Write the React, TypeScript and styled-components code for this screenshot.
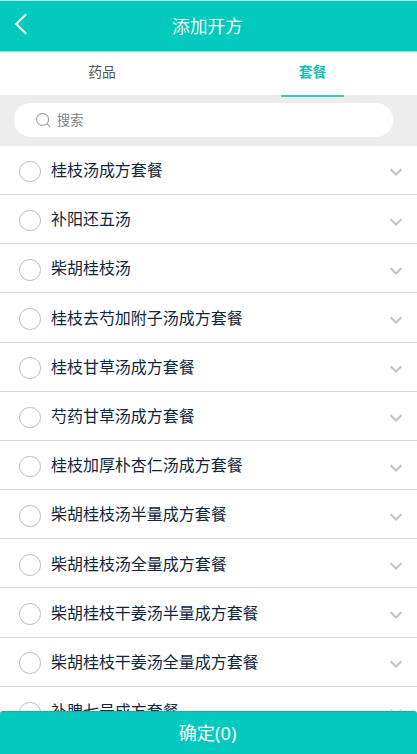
import React, { useState } from "react";
import styled, { createGlobalStyle } from "styled-components";

const GlobalStyle = createGlobalStyle`
  * { box-sizing: border-box; }
  body {
    margin: 0;
    overflow: hidden;
    font-family: "Noto Sans CJK SC", sans-serif;
    background: #fff;
  }
  button { font-family: inherit; border: 0; margin: 0; padding: 0; background: none; }
`;

const Screen = styled.div`
  display: flex;
  flex-direction: column;
  width: 100%;
  height: 754px;
  overflow: hidden;
  background: #fff;
`;

const Header = styled.header`
  flex: none;
  display: grid;
  grid-template-columns: 42px 1fr 44px;
  align-items: center;
  height: 52px;
  border-top: 1px solid #b9e9e5;
  border-bottom: 1px solid #8ae6df;
  background: #04cabe;
  color: #fff;
`;

const BackButton = styled.button`
  display: flex;
  padding: 0 0 4px 14px;
  color: #fff;
`;

const Title = styled.h1`
  margin: 0;
  padding-bottom: 3px;
  text-align: center;
  font-size: 17.8px;
  font-weight: 350;
  line-height: 26px;
`;

const TabBar = styled.nav`
  flex: none;
  position: relative;
  z-index: 1;
  display: grid;
  grid-template-columns: 204px 1fr;
  height: 45px;
`;

const Tab = styled.button<{ $active: boolean }>`
  display: flex;
  justify-content: center;
  justify-self: center;
  width: 63px;
  padding-top: 9px;
  font-size: 13.8px;
  line-height: 21px;
  font-weight: ${(p) => (p.$active ? 700 : 400)};
  color: ${(p) => (p.$active ? "#10beb4" : "#555")};
  border-bottom: 2px solid ${(p) => (p.$active ? "#40cac5" : "transparent")};
  margin-left: ${(p) => (p.$active ? "4px" : "0")};
`;

const SearchArea = styled.div`
  flex: none;
  height: 50.4px;
  margin-top: -1.6px;
  padding: 7.6px 24px 0 14px;
  background: #ededed;
`;

const SearchBox = styled.label`
  display: flex;
  align-items: center;
  gap: 6px;
  height: 34px;
  padding-left: 22px;
  border-radius: 17px;
  background: #fff;
  font-size: 13.2px;
  line-height: 20px;
  color: #808080;
`;

const List = styled.ul`
  flex: 1;
  min-height: 0;
  margin: 0;
  padding: 0;
  overflow: hidden;
  list-style: none;
`;

const Row = styled.li`
  display: flex;
  align-items: center;
  height: 49.2px;
  padding: 0 14px 0 19px;
  border-bottom: 1px solid #d6d6d6;
`;

const Radio = styled.button<{ $checked: boolean }>`
  flex: none;
  width: 21.6px;
  height: 21.6px;
  margin: 3px 10.4px 0 0;
  border: 1px solid #bcbcbc;
  border-radius: 50%;
  background: ${(p) => (p.$checked ? "#04cabe" : "#fff")};
`;

const Name = styled.span`
  flex: 1;
  padding-bottom: 1.6px;
  font-size: 15.97px;
  line-height: 24px;
  color: #10263c;
`;

const ChevronIcon = styled.svg`
  flex: none;
  margin-top: 5px;
`;

const Confirm = styled.button`
  flex: none;
  height: 43px;
  padding: 0 2px 1px 0;
  border-top: 1px solid #08b5aa;
  border-radius: 3px 3px 0 0;
  background: #04cabe;
  color: #fff;
  font-family: "Noto Sans", "Noto Sans CJK SC", sans-serif;
  font-size: 18.2px;
  line-height: 26px;
  font-weight: 400;
`;

const tabs = ["药品", "套餐"];

const packages = [
  "桂枝汤成方套餐",
  "补阳还五汤",
  "柴胡桂枝汤",
  "桂枝去芍加附子汤成方套餐",
  "桂枝甘草汤成方套餐",
  "芍药甘草汤成方套餐",
  "桂枝加厚朴杏仁汤成方套餐",
  "柴胡桂枝汤半量成方套餐",
  "柴胡桂枝汤全量成方套餐",
  "柴胡桂枝干姜汤半量成方套餐",
  "柴胡桂枝干姜汤全量成方套餐",
  "补脾七号成方套餐",
];

export default function App() {
  const [active, setActive] = useState(1);
  const [selected, setSelected] = useState<number[]>([]);

  const toggle = (i: number) =>
    setSelected((s) => (s.includes(i) ? s.filter((n) => n !== i) : [...s, i]));

  return (
    <Screen>
      <GlobalStyle />
      <Header>
        <BackButton aria-label="返回">
          <svg width="14" height="22" viewBox="0 0 14 22" fill="none" stroke="currentColor" strokeWidth="2">
            <path d="M12.3 1.2 2.2 11l10.1 9.8" />
          </svg>
        </BackButton>
        <Title>添加开方</Title>
      </Header>
      <TabBar>
        {tabs.map((label, i) => (
          <Tab key={label} $active={i === active} onClick={() => setActive(i)}>
            {label}
          </Tab>
        ))}
      </TabBar>
      <SearchArea>
        <SearchBox>
          <svg width="15" height="15" viewBox="0 0 15 15" fill="none" stroke="#a5a5a5" strokeWidth="1.1">
            <circle cx="6.6" cy="6.4" r="6" />
            <path d="m10.8 10.6 3.6 3.6" />
          </svg>
          搜索
        </SearchBox>
      </SearchArea>
      <List>
        {packages.map((name, i) => (
          <Row key={name}>
            <Radio aria-label={name} $checked={selected.includes(i)} onClick={() => toggle(i)} />
            <Name>{name}</Name>
            <ChevronIcon width="14" height="10" viewBox="0 0 14 10" fill="none" stroke="#c3c3c3" strokeWidth="2.2">
              <path d="m1.6 2.3 5.4 5.2 5.4-5.2" />
            </ChevronIcon>
          </Row>
        ))}
      </List>
      <Confirm>确定({selected.length})</Confirm>
    </Screen>
  );
}
